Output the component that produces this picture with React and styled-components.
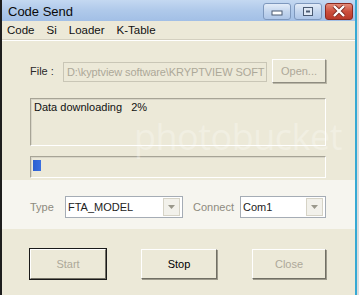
import styled, { createGlobalStyle } from 'styled-components'

const GlobalStyle = createGlobalStyle`
    html, body {
        margin: 0;
        padding: 0;
        background: #dcdcdc;
    }
    body {
        font-family: 'Liberation Sans', Arial, sans-serif;
        font-size: 11px;
    }
`

const Window = styled.div`
    position: relative;
    display: flex;
    flex-direction: column;
    width: 353px;
    height: 295px;
    background: #ece9d8;
    border-left: 2px solid #1e1e1e;
    border-right: 2px solid #35a9d4;
    overflow: hidden;
`

const TitleBar = styled.div`
    display: flex;
    align-items: center;
    justify-content: space-between;
    height: 21px;
    padding: 0 2px 0 6px;
    background: linear-gradient(to bottom, #c4d8f1 0%, #afc9ea 50%, #a2bfe6 100%);
`

const Title = styled.span`
    font-size: 13px;
    color: #0a0a0a;
    padding-top: 1px;
`

const TitleButtons = styled.div`
    display: flex;
    gap: 3px;
    padding-top: 1px;
`

const TitleButton = styled.div`
    display: flex;
    align-items: center;
    justify-content: center;
    width: 26px;
    height: 15px;
    border-radius: 3px;
    border: 1px solid ${({ close }) => (close ? '#8a2a22' : '#7e98bd')};
    background: ${({ close }) =>
        close
            ? 'linear-gradient(to bottom, #e48b79 0%, #cc4f3d 50%, #b93a2a 100%)'
            : 'linear-gradient(to bottom, #e3ecf8 0%, #c4d6ee 50%, #aec6e8 100%)'};
`

const MenuBar = styled.div`
    display: flex;
    height: 18px;
    align-items: center;
    padding-left: 3px;
    border-bottom: 1px solid #d4d0c0;
    box-shadow: 0 1px 0 #ffffff;
`

const MenuItem = styled.span`
    font-size: 11.5px;
    color: #111;
    padding: 0 0 0 2px;
    margin-right: 10px;
`

const Body = styled.div`
    position: relative;
    z-index: 1;
    display: flex;
    flex-direction: column;
    padding: 19px 29px 0 28px;
`

const FileRow = styled.div`
    display: flex;
    align-items: center;
    height: 24px;
`

const Label = styled.span`
    width: ${({ w }) => w}px;
    flex-shrink: 0;
    padding-left: ${({ indent }) => indent || 0}px;
    color: ${({ muted }) => (muted ? '#8d8a7e' : '#2a2a2a')};
`

const PathField = styled.div`
    flex: 1;
    min-width: 0;
    height: 18px;
    margin: 2px 5px 0 0;
    padding: 0 3px;
    display: flex;
    align-items: center;
    border: 1px solid #c9c6b6;
    color: #aca899;
    white-space: nowrap;
    overflow: hidden;
    letter-spacing: -0.1px;
`

const SmallButton = styled.div`
    width: 52px;
    height: 22px;
    display: flex;
    align-items: center;
    justify-content: center;
    color: #aca899;
    border: 1px solid;
    border-color: #ffffff #8e8c80 #8e8c80 #ffffff;
    box-shadow: 1px 1px 0 #b9b6a6;
`

const StatusBox = styled.div`
    margin-top: 15px;
    height: 42px;
    padding: 2px 3px;
    border: 1px solid;
    border-color: #a7a496 #ffffff #ffffff #a7a496;
    box-shadow: inset 1px 1px 0 #d9d6c8;
    color: #111;
`

const Progress = styled.div`
    margin-top: 10px;
    height: 16px;
    padding: 2px;
    display: flex;
    border: 1px solid;
    border-color: #a7a496 #ffffff #ffffff #a7a496;
    box-shadow: inset 1px 1px 0 #d9d6c8;
`

const Chunk = styled.div`
    height: 11px;
    margin-top: 1px;
    background: linear-gradient(to right, #2c5fd0, #3a6fe0);
`

const ComboRow = styled.div`
    display: flex;
    align-items: center;
    margin-top: 18px;
`

const Combo = styled.div`
    display: flex;
    align-items: center;
    justify-content: space-between;
    width: ${({ w }) => (w ? `${w}px` : 'auto')};
    flex: ${({ w }) => (w ? 'none' : '1')};
    height: 20px;
    padding-left: 2px;
    background: #fff;
    border: 1px solid #a5acb5;
    color: #222;
`

const ComboArrow = styled.div`
    width: 15px;
    height: 16px;
    margin-right: 2px;
    display: flex;
    align-items: center;
    justify-content: center;
    background: #f2f1eb;
    border: 1px solid #d6d3c6;
`

const ButtonRow = styled.div`
    display: flex;
    justify-content: space-between;
    margin-top: 31px;
`

const PushButton = styled.div`
    width: ${({ w }) => w}px;
    height: 28px;
    display: flex;
    align-items: center;
    justify-content: center;
    color: ${({ disabled }) => (disabled ? '#aca899' : '#000')};
    border: 1px solid;
    border-color: #ffffff #716f64 #716f64 #ffffff;
    box-shadow: ${({ isDefault }) =>
        isDefault ? '0 0 0 1px #1a1a1a' : '1px 1px 0 #9d9a8c'};
`

const WatermarkBand = styled.div`
    position: absolute;
    z-index: 0;
    left: -2px;
    right: -2px;
    top: 180px;
    height: 49px;
    background: #f6f5ef;
    pointer-events: none;
`

const Logo = styled.div`
    position: absolute;
    z-index: 2;
    left: 132px;
    top: 112px;
    color: rgba(255, 255, 255, 0.28);
    font-family: 'Open Sans', sans-serif;
    font-size: 36px;
    pointer-events: none;
    letter-spacing: -0.5px;
`

function Arrow() {
    return (
        <ComboArrow>
            <svg width="7" height="4" viewBox="0 0 7 4">
                <path d="M0 0 H7 L3.5 4 Z" fill="#9a988c" />
            </svg>
        </ComboArrow>
    )
}

function App() {
    return (
        <>
            <GlobalStyle />
            <Window>
                <TitleBar>
                    <Title>Code Send</Title>
                    <TitleButtons>
                        <TitleButton>
                            <svg width="14" height="10" viewBox="0 0 14 10">
                                <rect x="2" y="5" width="10" height="4" fill="#fff" stroke="#4a5a72" />
                            </svg>
                        </TitleButton>
                        <TitleButton>
                            <svg width="14" height="11" viewBox="0 0 14 11">
                                <rect x="2.5" y="1.5" width="9" height="8" fill="#dfe8f4" stroke="#4a5a72" />
                                <rect x="5" y="4.5" width="4" height="2" fill="#4a5a72" />
                            </svg>
                        </TitleButton>
                        <TitleButton close>
                            <svg width="16" height="12" viewBox="0 0 16 12">
                                <path d="M3 1 L13 11 M13 1 L3 11" stroke="#7a2a22" strokeWidth="4" />
                                <path d="M3 1 L13 11 M13 1 L3 11" stroke="#fff" strokeWidth="2.4" />
                            </svg>
                        </TitleButton>
                    </TitleButtons>
                </TitleBar>
                <MenuBar>
                    <MenuItem>Code</MenuItem>
                    <MenuItem>Si</MenuItem>
                    <MenuItem>Loader</MenuItem>
                    <MenuItem>K-Table</MenuItem>
                </MenuBar>
                <WatermarkBand />
                <Body>
                    <FileRow>
                        <Label w={33}>File :</Label>
                        <PathField>D:\kyptview software\KRYPTVIEW SOFT</PathField>
                        <SmallButton>Open...</SmallButton>
                    </FileRow>
                    <StatusBox>Data downloading&nbsp;&nbsp;&nbsp;2%</StatusBox>
                    <Progress>
                        <Chunk style={{ width: '8px' }} />
                    </Progress>
                    <ComboRow>
                        <Label w={35} muted>Type</Label>
                        <Combo w={114}>
                            FTA_MODEL
                            <Arrow />
                        </Combo>
                        <Label w={47} indent={10} muted>Connect</Label>
                        <Combo>
                            Com1
                            <Arrow />
                        </Combo>
                    </ComboRow>
                    <ButtonRow>
                        <PushButton w={74} disabled isDefault>Start</PushButton>
                        <PushButton w={74}>Stop</PushButton>
                        <PushButton w={72} disabled>Close</PushButton>
                    </ButtonRow>
                </Body>
                <Logo>photobucket</Logo>
            </Window>
        </>
    )
}

export default App
